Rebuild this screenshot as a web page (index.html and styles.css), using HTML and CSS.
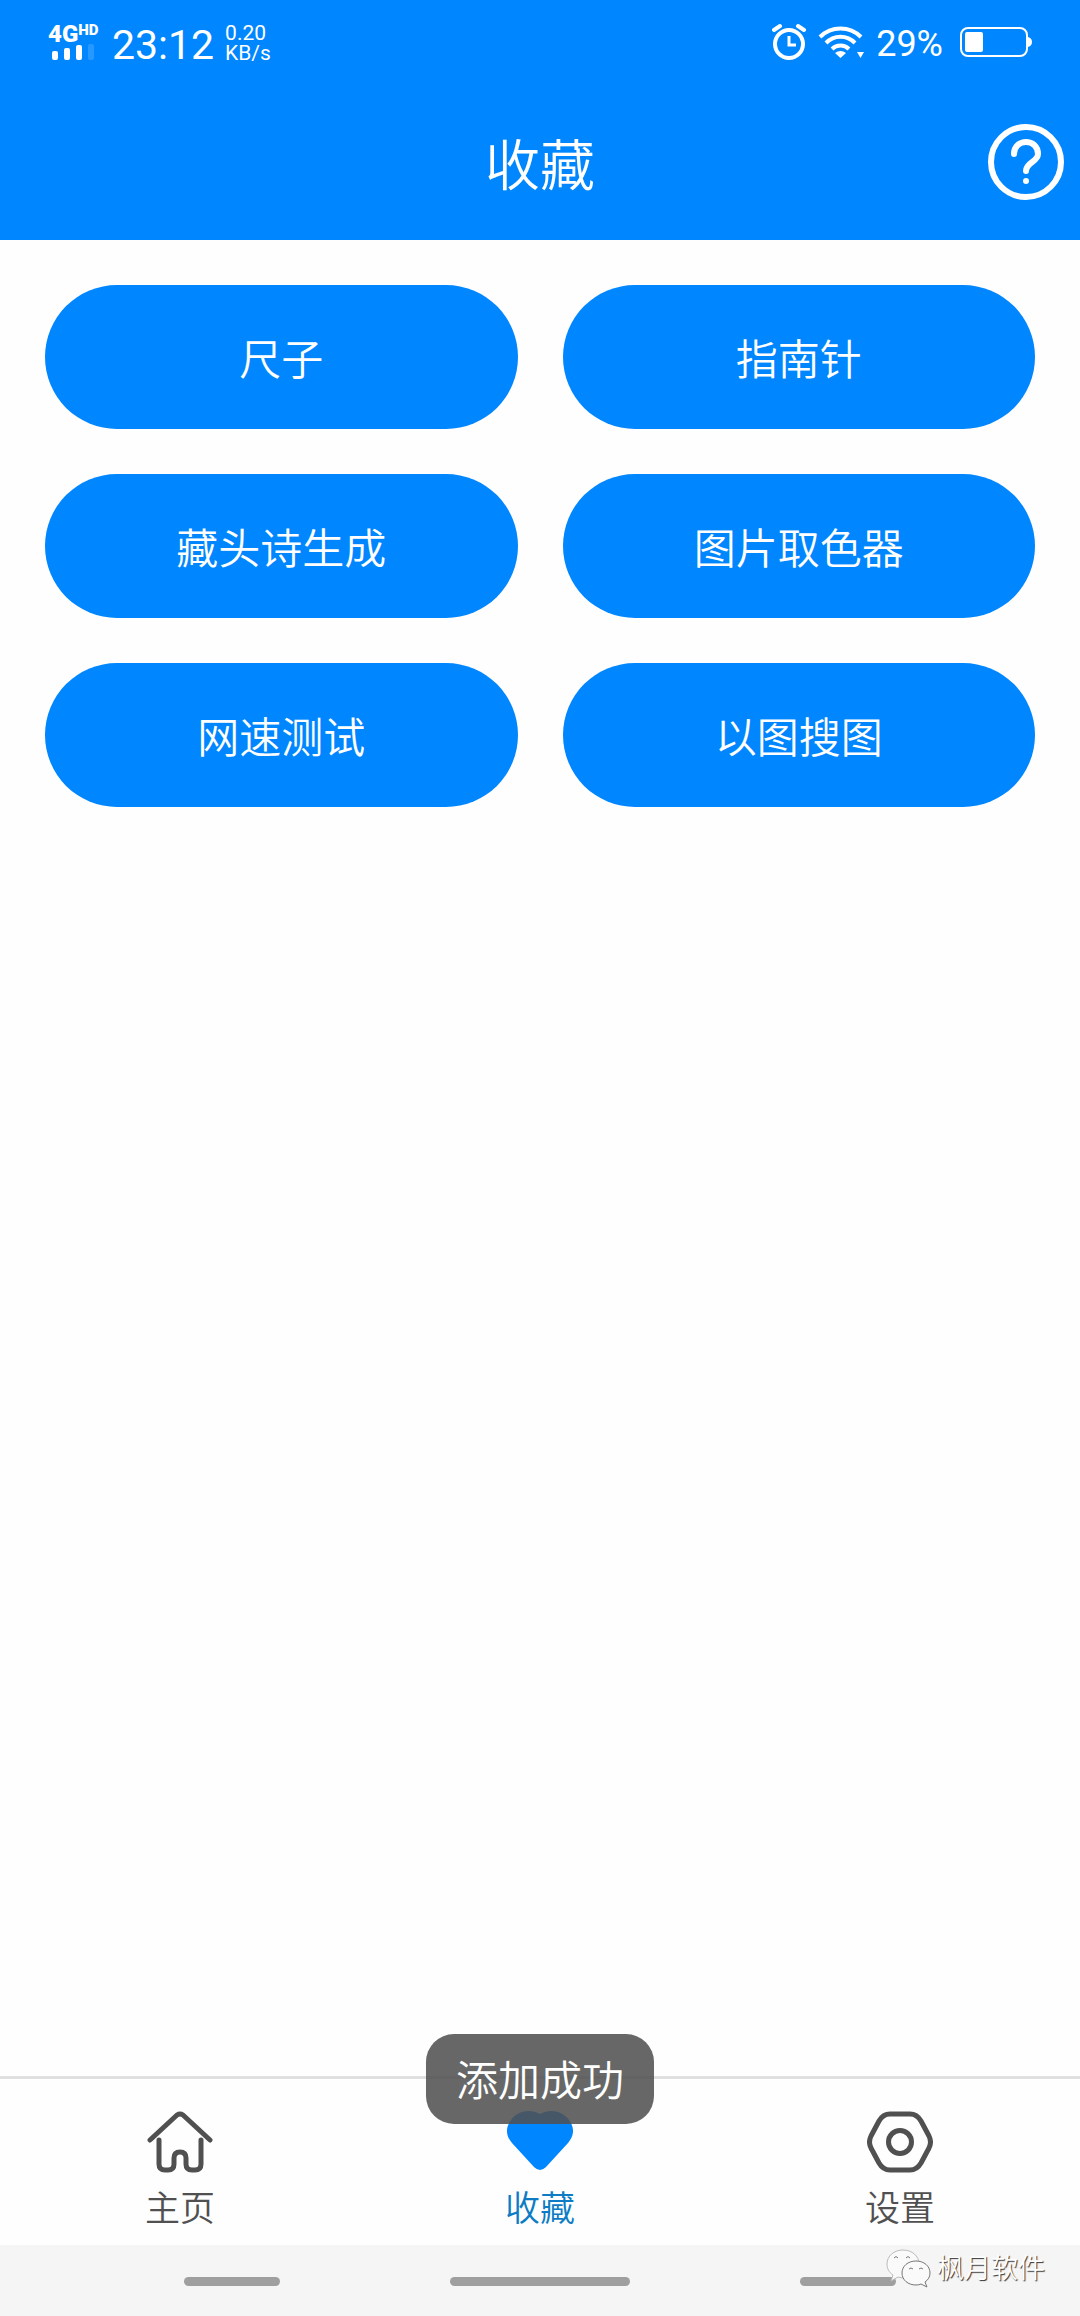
FILE: index.html
```html
<!DOCTYPE html>
<html lang="zh-CN">
<head>
<meta charset="utf-8">
<meta name="viewport" content="width=device-width">
<title>收藏</title>
<link rel="stylesheet" href="styles.css">
</head>
<body>
<div class="app">
  <header class="top">
    <div class="status">
      <div class="network">
        <div class="carrier"><span>4G</span><small>HD</small></div>
        <svg class="bars" width="44" height="17" viewBox="0 0 44 17" fill="#fff" aria-hidden="true">
          <rect x="0" y="7" width="6" height="9" rx="2"/>
          <rect x="12" y="4" width="6" height="12" rx="2"/>
          <rect x="24" y="1" width="6" height="15" rx="2"/>
          <rect x="36" y="0" width="6" height="16" rx="2" opacity=".15"/>
        </svg>
      </div>
      <time class="clock">23:12</time>
      <div class="speed"><span>0.20</span><span>KB/s</span></div>
      <div class="indicators">
        <svg width="34" height="38" viewBox="0 0 34 38" fill="none" stroke="#fff" stroke-width="4" aria-hidden="true">
          <circle cx="17" cy="21" r="14"/>
          <path d="M17 13v9h7" stroke-width="3"/>
          <path d="M2 7l6-4M26 3l6 4" stroke-linecap="round"/>
        </svg>
        <svg width="46" height="34" viewBox="0 0 46 34" fill="none" stroke="#fff" stroke-width="4" aria-hidden="true">
          <path d="M2 12a29 29 0 0 1 41 0M8 18a20 20 0 0 1 29 0M14 24a12 12 0 0 1 17 0"/>
          <path d="M17 28q5.500-4 11 0l-5.500 5z" fill="#fff" stroke="none"/>
          <path d="M39 27h7l-3.500 6z" fill="#fff" stroke="none"/>
        </svg>
        <span class="percent">29%</span>
        <svg width="72" height="32" viewBox="0 0 72 32" aria-hidden="true">
          <rect x="1" y="2" width="66" height="28" rx="7" fill="none" stroke="#fff" stroke-width="2"/>
          <rect x="5" y="6" width="18" height="20" rx="2" fill="#fff"/>
          <path d="M68 11q4 1 4 5t-4 5z" fill="#fff"/>
        </svg>
      </div>
    </div>
    <div class="titlebar">
      <h1>收藏</h1>
      <button class="help" aria-label="帮助">
        <svg width="78" height="78" viewBox="0 0 78 78" fill="none" stroke="#fff" stroke-width="6" stroke-linecap="round" aria-hidden="true">
          <circle cx="39" cy="39" r="35"/>
          <path d="M27 31C27 15 51 15 51 31C51 39 39 39 39 48"/>
          <circle cx="39" cy="58" r="3" fill="#fff" stroke="none"/>
        </svg>
      </button>
    </div>
  </header>

  <main class="tools">
    <button>尺子</button>
    <button>指南针</button>
    <button>藏头诗生成</button>
    <button>图片取色器</button>
    <button>网速测试</button>
    <button>以图搜图</button>
  </main>

  <nav class="tabs">
    <a href="#home">
      <svg width="66" height="66" viewBox="0 0 66 66" fill="none" stroke="#505050" stroke-width="5" stroke-linecap="round" stroke-linejoin="round" aria-hidden="true">
        <path d="M3 31L30 6q3-2 6 0L63 31"/>
        <path d="M12 31V55q0 6 6 6h3q6 0 6-6V49q0-6 6-6t6 6V55q0 6 6 6h3q6 0 6-6V31"/>
      </svg>
      <span>主页</span>
    </a>
    <a href="#favorites" class="active" aria-current="page">
      <svg width="66" height="66" viewBox="0 0 66 66" fill="#0086ff" aria-hidden="true">
        <path d="M33 5C42 0 55 1 62 11C68 19 67 27 61 34L39 58Q33 64 27 58L5 34C-1 27-2 19 4 11C11 1 24 0 33 5Z"/>
      </svg>
      <span>收藏</span>
    </a>
    <a href="#settings">
      <svg width="66" height="66" viewBox="0 0 66 66" fill="none" stroke="#505050" stroke-width="5" stroke-linejoin="round" aria-hidden="true">
        <path d="M23 5H43Q50 5 54 12L62 27Q65 33 62 39L54 54Q50 61 43 61H23Q16 61 12 54L4 39Q1 33 4 27L12 12Q16 5 23 5Z"/>
        <circle cx="33" cy="33" r="11.500"/>
      </svg>
      <span>设置</span>
    </a>
    <div class="toast" role="status">添加成功</div>
  </nav>

  <footer class="gestures">
    <i></i><i class="wide"></i><i></i>
    <div class="watermark">
      <svg width="46" height="40" viewBox="0 0 46 40" fill="#fafafa" stroke="#777" stroke-width="1" aria-hidden="true">
        <path d="M17 1C8 1 1 7 1 15c0 5 2 8 6 11l-2 6 7-4q3 1 6 1C28 29 33 23 33 15S26 1 17 1Z" stroke="#bbb"/>
        <path d="M30 12c-8 0-14 5-14 12s6 12 14 12q3 0 5-1l6 3-2-5c3-2 5-5 5-9 0-7-6-12-14-12Z"/>
        <path d="M8 9q2-3 4 0M20 9q2-3 4 0M23 20q2-2 4 0M33 20q2-2 4 0" fill="none"/>
      </svg>
      <span>枫月软件</span>
    </div>
  </footer>
</div>
</body>
</html>
```
FILE: styles.css
```css
* {
  box-sizing: border-box;
}

body {
  margin: 0;
  background: #fefefe;
  color: #505050;
  font-family: Roboto, "Noto Sans CJK SC", sans-serif;
}

button {
  border: 0;
  padding: 0;
  color: #fff;
  font: inherit;
  cursor: pointer;
}

svg {
  display: block;
}

.app {
  display: flex;
  flex-direction: column;
  min-height: 100vh;
}

.top {
  background: #0086ff;
  color: #fff;
}

.status {
  display: flex;
  align-items: center;
  height: 84px;
  padding: 0 48px;
}

.network {
  width: 64px;
}

.carrier {
  display: flex;
  align-items: flex-start;
  font-size: 24px;
  font-weight: 900;
  line-height: 20px;
}

.carrier small {
  font-size: 15px;
  line-height: 12px;
}

.bars {
  margin-left: 4px;
}

.clock {
  padding-top: 6px;
  font-size: 41px;
  line-height: 48px;
}

.speed {
  display: flex;
  flex-direction: column;
  margin-left: 11px;
  padding-top: 2px;
  font-size: 21px;
  line-height: 20px;
}

.indicators {
  display: flex;
  align-items: center;
  gap: 12px;
  margin-left: auto;
}

.percent {
  margin-right: 5px;
  padding-top: 4px;
  font-size: 36px;
  line-height: 40px;
}

.titlebar {
  display: grid;
  grid-template-columns: 1fr auto 1fr;
  align-items: center;
  height: 156px;
  padding: 0 15px;
}

.titlebar h1 {
  grid-column: 2;
  margin: 0;
  padding-top: 8px;
  font-size: 55px;
  font-weight: 350;
  line-height: 72px;
}

.help {
  justify-self: end;
  border-radius: 50%;
  background: none;
}

.tools {
  flex: 1;
  display: grid;
  grid-template-columns: 1fr 1fr;
  align-content: start;
  gap: 45px;
  padding: 45px;
}

.tools button {
  height: 144px;
  padding-bottom: 2px;
  border-radius: 72px;
  background: #0086ff;
  font-size: 42px;
  font-weight: 350;
}

.tabs {
  position: relative;
  display: grid;
  grid-template-columns: repeat(3, 1fr);
  border-top: 3px solid #e0e0e0;
  padding: 30px 0 11px;
}

.tabs a {
  display: flex;
  flex-direction: column;
  align-items: center;
  gap: 11px;
  color: inherit;
  font-size: 35px;
  font-weight: 350;
  line-height: 48px;
  text-decoration: none;
}

.tabs .active {
  color: #0d7cc4;
}

.toast {
  position: absolute;
  left: 50%;
  bottom: 121px;
  transform: translateX(-50%);
  padding: 18px 30px 12px;
  border-radius: 28px;
  background: rgba(80, 80, 80, 0.87);
  color: #fff;
  font-size: 42px;
  font-weight: 350;
  line-height: 60px;
  white-space: nowrap;
}

.gestures {
  position: relative;
  display: flex;
  align-items: center;
  justify-content: space-between;
  height: 71px;
  padding: 2px 17% 0;
  background: #f5f5f5;
}

.gestures i {
  width: 96px;
  height: 9px;
  border-radius: 5px;
  background: #9f9f9f;
}

.gestures .wide {
  width: 180px;
}

.watermark {
  position: absolute;
  top: 4px;
  right: 35px;
  display: flex;
  align-items: center;
  gap: 5px;
  color: #fff;
  font-size: 27px;
  font-weight: 350;
  line-height: 40px;
  text-shadow: 1px 1px 1px #333;
}
```
